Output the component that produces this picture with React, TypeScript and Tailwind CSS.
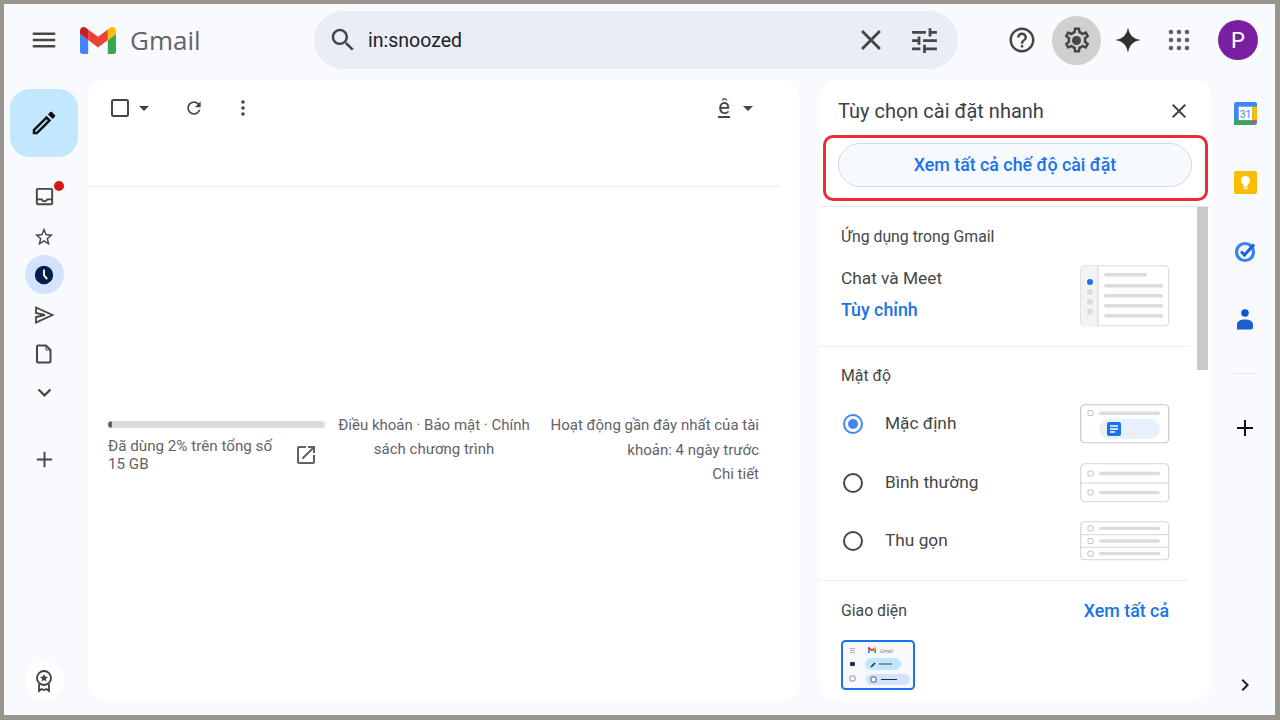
import React from "react";

const P: Record<string, string> = {
  menu: "M3 18h18v-2H3v2zm0-5h18v-2H3v2zm0-7v2h18V6H3z",
  search: "M15.5 14h-.79l-.28-.27C15.41 12.59 16 11.11 16 9.5 16 5.91 13.09 3 9.5 3S3 5.91 3 9.5 5.91 16 9.5 16c1.61 0 3.09-.59 4.23-1.57l.27.28v.79l5 4.99L20.49 19l-4.99-5zm-6 0C7.01 14 5 11.99 5 9.5S7.01 5 9.5 5 14 7.01 14 9.5 11.99 14 9.5 14z",
  close: "M19 6.41L17.59 5 12 10.59 6.41 5 5 6.41 10.59 12 5 17.59 6.41 19 12 13.41 17.59 19 19 17.59 13.41 12z",
  tune: "M3 17v2h6v-2H3zM3 5v2h10V5H3zm10 16v-2h8v-2h-8v-2h-2v6h2zM7 9v2H3v2h4v2h2V9H7zm14 4v-2H11v2h10zm-6-4h2V7h4V5h-4V3h-2v6z",
  help: "M11 18h2v-2h-2v2zm1-16C6.48 2 2 6.48 2 12s4.48 10 10 10 10-4.48 10-10S17.52 2 12 2zm0 18c-4.41 0-8-3.59-8-8s3.59-8 8-8 8 3.59 8 8-3.59 8-8 8zm0-14c-2.21 0-4 1.79-4 4h2c0-1.1.9-2 2-2s2 .9 2 2c0 2-3 1.75-3 5h2c0-2.25 3-2.5 3-5 0-2.21-1.79-4-4-4z",
  gear: "M19.43 12.98c.04-.32.07-.64.07-.98 0-.34-.03-.66-.07-.98l2.11-1.65c.19-.15.24-.42.12-.64l-2-3.46c-.09-.16-.26-.25-.44-.25-.06 0-.12.01-.17.03l-2.49 1c-.52-.4-1.08-.73-1.69-.98l-.38-2.65C14.46 2.18 14.25 2 14 2h-4c-.25 0-.46.18-.49.42l-.38 2.65c-.61.25-1.17.59-1.69.98l-2.49-1c-.06-.02-.12-.03-.18-.03-.17 0-.34.09-.43.25l-2 3.46c-.13.22-.07.49.12.64l2.11 1.65c-.04.32-.07.65-.07.98 0 .33.03.66.07.98l-2.11 1.65c-.19.15-.24.42-.12.64l2 3.46c.09.16.26.25.44.25.06 0 .12-.01.17-.03l2.49-1c.52.4 1.08.73 1.69.98l.38 2.65c.03.24.24.42.49.42h4c.25 0 .46-.18.49-.42l.38-2.65c.61-.25 1.17-.59 1.69-.98l2.49 1c.06.02.12.03.18.03.17 0 .34-.09.43-.25l2-3.46c.12-.22.07-.49-.12-.64l-2.11-1.65zm-1.98-1.71c.04.31.05.52.05.73 0 .21-.02.43-.05.73l-.14 1.13.89.7 1.08.84-.7 1.21-1.27-.51-1.04-.42-.9.68c-.43.32-.84.56-1.25.73l-1.06.43-.16 1.13-.2 1.35h-1.4l-.19-1.35-.16-1.13-1.06-.43c-.43-.18-.83-.41-1.23-.71l-.91-.7-1.06.43-1.27.51-.7-1.21 1.08-.84.89-.7-.14-1.13c-.03-.31-.05-.54-.05-.74s.02-.43.05-.73l.14-1.13-.89-.7-1.08-.84.7-1.21 1.27.51 1.04.42.9-.68c.43-.32.84-.56 1.25-.73l1.06-.43.16-1.13.2-1.35h1.39l.19 1.35.16 1.13 1.06.43c.43.18.83.41 1.23.71l.91.7 1.06-.43 1.27-.51.7 1.21-1.07.85-.89.7.14 1.13z",
  refresh: "M17.65 6.35C16.2 4.9 14.21 4 12 4c-4.42 0-7.99 3.58-7.99 8s3.57 8 7.99 8c3.73 0 6.84-2.55 7.73-6h-2.08c-.82 2.33-3.04 4-5.65 4-3.31 0-6-2.69-6-6s2.69-6 6-6c1.66 0 3.14.69 4.22 1.78L13 11h7V4l-2.35 2.35z",
  inbox: "M19 3H5c-1.1 0-2 .9-2 2v14c0 1.1.9 2 2 2h14c1.1 0 2-.9 2-2V5c0-1.1-.9-2-2-2zm0 16H5v-3h3.56c.69 1.19 1.97 2 3.45 2s2.75-.81 3.45-2H19v3zm0-5h-4.99c0 1.1-.9 2-2 2s-2-.9-2-2H5V5h14v9z",
  star: "M22 9.24l-7.19-.62L12 2 9.19 8.63 2 9.24l5.46 4.73L5.82 21 12 17.27 18.18 21l-1.63-7.03L22 9.24zM12 15.4l-3.76 2.27 1-4.28-3.32-2.88 4.38-.38L12 6.1l1.71 4.04 4.38.38-3.32 2.88 1 4.28L12 15.4z",
  pencil: "M14.06 9.02l.92.92L5.92 19H5v-.92l9.06-9.06M17.66 3c-.25 0-.51.1-.7.29l-1.83 1.83 3.75 3.75 1.83-1.83c.39-.39.39-1.02 0-1.41l-2.34-2.34c-.2-.2-.45-.29-.71-.29zm-3.6 3.19L3 17.25V21h3.75L17.81 9.94l-3.75-3.75z",
  down: "M7.41 8.59L12 13.17l4.59-4.58L18 10l-6 6-6-6z",
  right: "M8.59 16.59L13.17 12 8.59 7.41 10 6l6 6-6 6z",
  plus: "M20 13h-7v7h-2v-7H4v-2h7V4h2v7h7v2z",
  open: "M19 19H5V5h7V3H5c-1.1 0-2 .9-2 2v14c0 1.1.9 2 2 2h14c1.1 0 2-.9 2-2v-7h-2v7zM14 3v2h3.59l-9.83 9.83 1.41 1.41L19 6.41V10h2V3h-7z",
};

function I({ n, s = 24, c = "#444746" }: { n: string; s?: number; c?: string }) {
  return (
    <svg width={s} height={s} viewBox="0 0 24 24" fill={c} className="shrink-0">
      <path d={P[n]} />
    </svg>
  );
}

function Caret() {
  return (
    <svg width="10" height="5" viewBox="0 0 10 5" fill="#444746">
      <path d="M0 0l5 5 5-5z" />
    </svg>
  );
}

function GmailLogo({ w = 36, h = 27 }: { w?: number; h?: number }) {
  return (
    <svg width={w} height={h} viewBox="52 42 88 66" className="shrink-0">
      <path fill="#4285f4" d="M58 108h14V74L52 59v43c0 3.32 2.69 6 6 6" />
      <path fill="#34a853" d="M120 108h14c3.32 0 6-2.69 6-6V59l-20 15" />
      <path fill="#fbbc04" d="M120 48v26l20-15v-8c0-7.42-8.47-11.65-14.4-7.2" />
      <path fill="#ea4335" d="M72 74V48l24 18 24-18v26L96 92" />
      <path fill="#c5221f" d="M52 51v8l20 15V48l-5.6-4.2c-5.94-4.45-14.4-.22-14.4 7.2" />
    </svg>
  );
}

function Apps() {
  const pts = [4, 12, 20];
  return (
    <svg width="24" height="24" viewBox="0 0 24 24" fill="#5f6368">
      {pts.map((y) => pts.map((x) => <circle key={`${x}-${y}`} cx={x} cy={y} r="2.3" />))}
    </svg>
  );
}

function ChatIllus() {
  return (
    <svg width="90" height="62" viewBox="0 0 90 62">
      <rect x=".75" y=".75" width="88" height="60" rx="4" fill="#fff" stroke="#dadce0" strokeWidth="1.2" />
      <path d="M1 5a4 4 0 0 1 4-4h13v60H5a4 4 0 0 1-4-4z" fill="#f1f3f4" />
      <path d="M18 1v60" stroke="#dadce0" strokeWidth="1.2" />
      <circle cx="10" cy="17" r="3" fill="#1a73e8" />
      <circle cx="10" cy="27" r="3" fill="#dadce0" />
      <circle cx="10" cy="37" r="3" fill="#dadce0" />
      <circle cx="10" cy="46.500" r="3" fill="#dadce0" />
      <rect x="24" y="8" width="43" height="3.500" rx="1.700" fill="#dadce0" />
      <rect x="24" y="19" width="59" height="3.500" rx="1.700" fill="#dadce0" />
      <rect x="24" y="29" width="59" height="3.500" rx="1.700" fill="#dadce0" />
      <rect x="24" y="39" width="59" height="3.500" rx="1.700" fill="#dadce0" />
      <rect x="24" y="49" width="59" height="3.500" rx="1.700" fill="#dadce0" />
    </svg>
  );
}

function DefaultIllus() {
  return (
    <svg width="90" height="40" viewBox="0 0 90 40">
      <rect x=".75" y=".75" width="88" height="38" rx="4" fill="#fff" stroke="#c4c7c5" strokeWidth="1.2" />
      <rect x="8" y="6.500" width="5" height="5" rx="1" fill="#fff" stroke="#bdc1c6" />
      <rect x="19" y="7.500" width="61" height="3.500" rx="1.700" fill="#dadce0" />
      <rect x="19" y="15" width="61" height="20" rx="10" fill="#e8f0fe" />
      <rect x="27" y="18" width="14" height="14" rx="2" fill="#1a73e8" />
      <path d="M30 22h8M30 25h8M30 28h5" stroke="#fff" strokeWidth="1.500" />
    </svg>
  );
}

function RowsIllus({ n }: { n: 2 | 3 }) {
  const rowH = 38 / n;
  return (
    <svg width="90" height="40" viewBox="0 0 90 40">
      <rect x=".75" y=".75" width="88" height="38" rx="4" fill="#fff" stroke="#d3d5d7" strokeWidth="1.2" />
      {Array.from({ length: n }).map((_, i) => {
        const cy = 1 + rowH * i + rowH / 2;
        return (
          <g key={i}>
            {i > 0 && <path d={`M1 ${1 + rowH * i}h88`} stroke="#d3d5d7" strokeWidth="1" />}
            <rect x="8" y={cy - 2.500} width="5" height="5" rx="1" fill="#fff" stroke="#bdc1c6" />
            <rect x="19" y={cy - 1.700} width="61" height="3.400" rx="1.700" fill="#dadce0" />
          </g>
        );
      })}
    </svg>
  );
}

function ThemeThumb() {
  return (
    <svg width="74" height="50" viewBox="0 0 74 50">
      <rect x="1" y="1" width="72" height="48" rx="3.500" fill="#f6f8fc" stroke="#1a73e8" strokeWidth="2" />
      <path d="M9 8.500h5M9 10.500h5M9 12.500h5" stroke="#9aa0a6" strokeWidth=".8" />
      <rect x="9" y="22" width="5" height="4" rx="1" fill="#202f4f" />
      <rect x="9" y="36" width="5" height="5" rx="1" fill="#fff" stroke="#5f6368" strokeWidth=".7" />
      <svg x="27" y="7" width="8" height="6" viewBox="52 42 88 66">
        <path fill="#4285f4" d="M58 108h14V74L52 59v43c0 3.32 2.69 6 6 6" />
        <path fill="#34a853" d="M120 108h14c3.32 0 6-2.69 6-6V59l-20 15" />
        <path fill="#fbbc04" d="M120 48v26l20-15v-8c0-7.42-8.47-11.65-14.4-7.2" />
        <path fill="#ea4335" d="M72 74V48l24 18 24-18v26L96 92" />
        <path fill="#c5221f" d="M52 51v8l20 15V48l-5.6-4.2c-5.94-4.45-14.4-.22-14.4 7.2" />
      </svg>
      <text x="39" y="12.500" fontSize="5" fill="#80868b" fontFamily="Roboto, sans-serif">Gmail</text>
      <rect x="24" y="18" width="36" height="12" rx="6" fill="#c2e7ff" />
      <path d="M30 27l4-4" stroke="#202124" strokeWidth="1.500" />
      <path d="M38 24h13" stroke="#3c4043" strokeWidth="1" />
      <rect x="25" y="34" width="44" height="11" rx="5.500" fill="#d3e3fd" />
      <rect x="30" y="37" width="5" height="5" rx="1" fill="#fff" stroke="#202f4f" strokeWidth=".8" />
      <path d="M40 39.500h16" stroke="#202f4f" strokeWidth="1" />
    </svg>
  );
}

function Radio({ on }: { on?: boolean }) {
  return (
    <span className={`flex h-[20px] w-[20px] items-center justify-center rounded-full border-2 ${on ? "border-[#4285f4]" : "border-[#444746]"}`}>
      {on && <span className="h-[10px] w-[10px] rounded-full bg-[#4285f4]" />}
    </span>
  );
}

function DensityRow({ label, on, art, cls }: { label: string; on?: boolean; art: React.ReactNode; cls: string }) {
  return (
    <div className={`flex items-center pl-[23px] pr-[19px] ${cls}`}>
      <div className="flex w-[42px]"><Radio on={on} /></div>
      <span className="flex-1 text-[17.300px] text-[#444746]">{label}</span>
      {art}
    </div>
  );
}

function SideIcon({ children, cls = "" }: { children: React.ReactNode; cls?: string }) {
  return <div className={`flex h-[39px] w-[39px] items-center justify-center rounded-full ${cls}`}>{children}</div>;
}

function RailIcon({ children }: { children: React.ReactNode }) {
  return <div className="flex h-[23px] w-[23px] items-center justify-center">{children}</div>;
}

export default function App() {
  return (
    <div className="flex h-[720px] w-[1280px] flex-col overflow-hidden border-t-[4px] border-r-[5px] border-b-[5px] border-l-[4px] border-[#9a958f] bg-[#f8fafd] [font-family:Roboto,sans-serif]">
      {/* header */}
      <header className="flex h-[72px] shrink-0 items-center">
        <div className="ml-[25px] flex w-[285px] items-center">
          <I n="menu" s={30} c="#444746" />
          <div className="ml-[21px]"><GmailLogo /></div>
          <span className="ml-[14px] text-[26px] leading-none text-[#5f6368] [font-family:'Open_Sans',sans-serif]">Gmail</span>
        </div>
        <div className="flex h-[58px] w-[644px] items-center rounded-full bg-[#e9eef6] pl-[14px] pr-[17px]">
          <I n="search" s={30} c="#444746" />
          <span className="ml-[10px] flex-1 pt-[2px] text-[19.500px] text-[#202124]">in:snoozed</span>
          <I n="close" s={34} c="#444746" />
          <div className="ml-[20px]"><I n="tune" s={33} c="#444746" /></div>
        </div>
        <div className="ml-[49px] flex items-center">
          <I n="help" s={30} c="#444746" />
          <div className="relative ml-[15px] flex h-[49px] w-[49px] items-center justify-center rounded-full bg-[#d0d0d0]">
            <I n="gear" s={30} c="#444746" />
            <span className="absolute left-[20px] top-[20px] h-[9px] w-[9px] rounded-full bg-[#444746]" />
          </div>
          <div className="ml-[12px]">
            <svg width="30" height="30" viewBox="0 0 24 24" fill="#2f3133">
              <path d="M12 1.500C12.800 7.800 16.200 11.200 22.500 12 16.200 12.800 12.800 16.200 12 22.500 11.200 16.200 7.800 12.800 1.500 12 7.800 11.200 11.200 7.800 12 1.500Z" />
            </svg>
          </div>
          <div className="ml-[24px]"><Apps /></div>
          <div className="ml-[27px] flex h-[40px] w-[40px] items-center justify-center rounded-full bg-[#7b1fa2] text-[22px] text-white">P</div>
        </div>
      </header>

      {/* body */}
      <div className="flex min-h-0 flex-1 pt-[4px] pb-[15px]">
        {/* sidebar */}
        <aside className="mr-[4px] flex w-[80px] shrink-0 flex-col items-center">
          <div className="mt-[9px] flex h-[68px] w-[68px] items-center justify-center rounded-[20px] bg-[#c2e7ff]">
            <I n="pencil" s={30} c="#111" />
          </div>
          <div className="relative mt-[20px]">
            <SideIcon><I n="inbox" s={23} /></SideIcon>
            <span className="absolute left-[29px] top-[4px] h-[10px] w-[10px] rounded-full bg-[#d3191c]" />
          </div>
          <SideIcon cls="mt-[1px]"><I n="star" s={22} /></SideIcon>
          <SideIcon cls="-mt-[1px] bg-[#d3e3fd]">
            <svg width="22" height="22" viewBox="0 0 24 24">
              <circle cx="12" cy="12" r="10" fill="#041e49" />
              <path d="M12 6v6.500l3.500 4" fill="none" stroke="#fff" strokeWidth="2" />
            </svg>
          </SideIcon>
          <SideIcon cls="mt-[1px]">
            <svg width="24" height="24" viewBox="0 0 24 24" fill="none" stroke="#444746" strokeWidth="1.800">
              <path d="M4 4.500L20.500 12 4 19.500v-5.500l9-2-9-2z" />
            </svg>
          </SideIcon>
          <SideIcon>
            <svg width="24" height="24" viewBox="0 0 24 24" fill="none" stroke="#444746" strokeWidth="2">
              <path d="M6 3.500h8l4.500 4.500v11.500a1 1 0 0 1-1 1H6a1 1 0 0 1-1-1v-15a1 1 0 0 1 1-1z" />
              <path d="M14 3.500V8h4.500" strokeWidth="1" />
            </svg>
          </SideIcon>
          <SideIcon><I n="down" s={27} /></SideIcon>
          <SideIcon cls="mt-[28px]"><I n="plus" s={23} /></SideIcon>
          <div className="flex-1" />
          <SideIcon cls="bg-white">
            <svg width="22" height="24" viewBox="0 0 22 24" fill="none" stroke="#3c4043" strokeWidth="1.800">
              <circle cx="11" cy="9" r="7" />
              <path d="M6 15v7l2.500-2 2.500 1 2.500-1 2.500 2v-7" />
              <path d="M11 5l1.200 2.600 2.800.3-2.100 1.900.6 2.800-2.500-1.500-2.500 1.500.6-2.800-2.100-1.900 2.800-.3z" fill="#3c4043" stroke="none" />
            </svg>
          </SideIcon>
        </aside>

        {/* list card */}
        <main className="w-[711px] shrink-0 rounded-[16px] bg-white">
          <div className="w-[692px]">
            <div className="flex h-[56px] items-center pl-[23px] pr-[27px]">
              <svg width="18" height="18" viewBox="0 0 18 18" fill="none" stroke="#444746" strokeWidth="2"><rect x="1" y="1" width="16" height="16" rx="1.500" /></svg>
              <div className="ml-[10px]"><Caret /></div>
              <div className="ml-[35px]"><I n="refresh" s={20} /></div>
              <div className="ml-[29px]">
                <svg width="20" height="20" viewBox="0 0 20 20" fill="#444746"><circle cx="10" cy="4" r="1.800" /><circle cx="10" cy="10" r="1.800" /><circle cx="10" cy="16" r="1.800" /></svg>
              </div>
              <div className="flex-1" />
              <div className="flex flex-col items-center">
                <span className="text-[22px] leading-[18px] text-[#444746]">ê</span>
                <span className="mt-[0px] h-[2px] w-[12px] bg-[#444746]" />
              </div>
              <div className="ml-[13px]"><Caret /></div>
            </div>
            <div className="h-[51px] border-b border-[#eceff1]" />
            <div className="mt-[234px] flex justify-between pl-[20px] pr-[21px] text-[15px] text-[#5f6368]">
              <div className="w-[217px] shrink-0">
                <div className="h-[7px] overflow-hidden rounded-full bg-[#dadce0]">
                  <div className="h-full w-[4px] rounded-full bg-[#5f6368]" />
                </div>
                <div className="mt-[9px] flex items-center leading-[18px]">
                  <div className="w-[174px] text-[15.200px]">Đã dùng 2% trên tổng số 15 GB</div>
                  <div className="ml-[12px]"><I n="open" s={24} c="#5f6368" /></div>
                </div>
              </div>
              <div className="-mt-[8px] ml-[13px] w-[192px] shrink-0 text-center leading-[24px]">Điều khoản · Bảo mật · Chính sách chương trình</div>
              <div className="-mt-[8px] ml-[10px] flex-1 text-right leading-[24.500px]">
                <div className="whitespace-nowrap">Hoạt động gần đây nhất của tài</div>
                <div>khoản: 4 ngày trước</div>
                <div>Chi tiết</div>
              </div>
            </div>
          </div>
        </main>

        <div className="w-[21px] shrink-0" />

        {/* settings panel */}
        <section className="relative flex w-[391px] shrink-0 flex-col overflow-hidden rounded-[16px] bg-white">
          <div className="flex h-[63px] shrink-0 items-center justify-between pb-[1px] pl-[18px] pr-[20px]">
            <span className="text-[20px] text-[#3c4043]">Tùy chọn cài đặt nhanh</span>
            <I n="close" s={24} c="#444746" />
          </div>
          <div className="ml-[18px] mr-[19px] flex h-[44px] shrink-0 items-center justify-center rounded-full border border-[#d3d8de] bg-[#f6f9fd] text-[17.800px] font-medium text-[#1a73e8]">
            Xem tất cả chế độ cài đặt
          </div>
          <div className="h-[20px] shrink-0 border-b border-[#e8eaed]" />
          <div className="flex min-h-0 flex-1">
            <div className="w-[369px] shrink-0">
              <div className="h-[140px] border-b border-[#eceff1] pl-[21px] pr-[19px] pt-[21px]">
                <div className="text-[15.800px] leading-[18px] text-[#444746]">Ứng dụng trong Gmail</div>
                <div className="mt-[19px] flex items-start justify-between">
                  <div>
                    <div className="mt-[2px] text-[17.300px] leading-[22px] text-[#444746]">Chat và Meet</div>
                    <div className="mt-[10px] text-[17.800px] font-medium leading-[22px] text-[#1a73e8]">Tùy chỉnh</div>
                  </div>
                  <ChatIllus />
                </div>
              </div>
              <div className="h-[234px] border-b border-[#eceff1] pt-[20px]">
                <div className="px-[21px] text-[15.800px] leading-[18px] text-[#444746]">Mật độ</div>
                <DensityRow cls="mt-[19px]" label="Mặc định" on art={<DefaultIllus />} />
                <DensityRow cls="mt-[19px]" label="Bình thường" art={<RowsIllus n={2} />} />
                <DensityRow cls="mt-[18px]" label="Thu gọn" art={<RowsIllus n={3} />} />
              </div>
              <div className="pl-[21px] pr-[20px] pt-[20px]">
                <div className="flex items-center justify-between leading-[20px]">
                  <span className="text-[15.800px] text-[#444746]">Giao diện</span>
                  <span className="text-[17.800px] font-medium text-[#1a73e8]">Xem tất cả</span>
                </div>
                <div className="mt-[19px]"><ThemeThumb /></div>
              </div>
            </div>
            <div className="ml-[8px] w-[11px] shrink-0">
              <div className="h-[163px] bg-[#c9c9c9]" />
            </div>
          </div>
          <div className="absolute left-[3px] top-[55px] h-[66px] w-[385px] rounded-[10px] border-[3px] border-[#ea2c33]" />
        </section>

        {/* right rail */}
        <aside className="flex flex-1 flex-col items-center pl-[4px] pt-[22px]">
          <RailIcon>
            <svg width="23" height="23" viewBox="0 0 22 22">
              <rect width="22" height="22" rx="2" fill="#4285f4" />
              <rect x="4.500" y="4.500" width="13" height="13" fill="#fff" />
              <rect x="17.500" y="4.500" width="4.500" height="13" fill="#fbbc04" />
              <rect y="17.500" width="17.500" height="4.500" fill="#34a853" />
              <path d="M17.500 17.500H22L17.500 22z" fill="#ea4335" />
              <text x="11" y="15" fontSize="10" textAnchor="middle" fill="#4285f4" fontFamily="Roboto, sans-serif">31</text>
            </svg>
          </RailIcon>
          <div className="mt-[46px]">
            <RailIcon>
              <svg width="23" height="23" viewBox="0 0 23 23">
                <rect width="23" height="23" rx="2" fill="#fbbc04" />
                <circle cx="11.500" cy="9.500" r="4.500" fill="#fff" />
                <rect x="9.500" y="12.500" width="4" height="3" fill="#fff" />
                <rect x="9.500" y="16.500" width="4" height="1.600" fill="#fff" />
              </svg>
            </RailIcon>
          </div>
          <div className="mt-[46px]">
            <RailIcon>
              <svg width="23" height="23" viewBox="0 0 23 23">
                <circle cx="11" cy="12" r="8.500" fill="none" stroke="#3b82f0" strokeWidth="3.200" />
                <path d="M7 11.500l3.500 3.500L20 4.500" fill="none" stroke="#1662d8" strokeWidth="3" />
              </svg>
            </RailIcon>
          </div>
          <div className="mt-[45px]">
            <RailIcon>
              <svg width="18" height="21" viewBox="0 0 18 21">
                <circle cx="9" cy="4" r="3.800" fill="#0b57d0" />
                <path d="M1 20.500v-5c0-3 3-5 8-5s8 2 8 5v2.500a2.500 2.500 0 0 1-2.500 2.500z" fill="#1a5fd0" />
              </svg>
            </RailIcon>
          </div>
          <div className="mt-[42px] h-px w-[25px] bg-[#e3e6ea]" />
          <div className="mt-[42px]"><I n="plus" s={24} c="#111" /></div>
          <div className="flex-1" />
          <div className="mb-[3px]"><I n="right" s={24} c="#1f1f1f" /></div>
        </aside>
      </div>
    </div>
  );
}
